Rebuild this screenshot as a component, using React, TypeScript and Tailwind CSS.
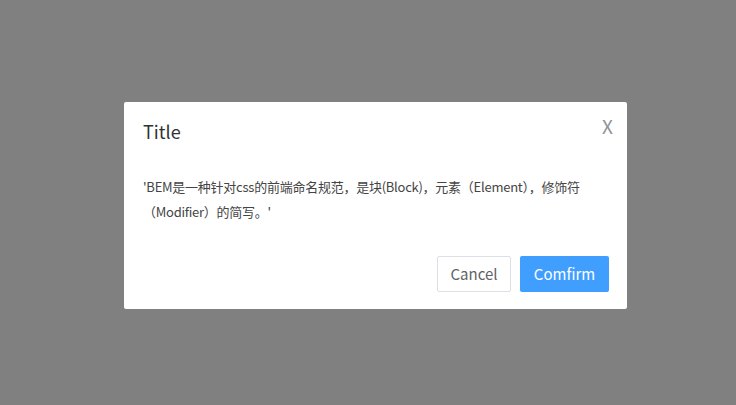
export default function App() {
  return (
    <div
      className="w-[736px] h-[405px] bg-[#808080] pl-[124px] pt-[102px]"
      style={{ fontFamily: '"Noto Sans CJK SC", "Noto Sans", sans-serif' }}
    >
      <div className="w-[503px] h-[207px] bg-white rounded-[2px] flex flex-col">
        {/* Header */}
        <div className="flex items-start justify-between pl-[19px] pr-[14px] pt-[16px]">
          <h3 className="text-[18px] leading-[26px] text-[#303133]">Title</h3>
          <button className="text-[19px] leading-[26px] text-[#909399] mt-[-5px]">X</button>
        </div>

        {/* Body */}
        <div className="mt-[30px] px-[19px] text-[13px] leading-[25px] tracking-[-0.25px] text-[#444]">
          'BEM是一种针对css的前端命名规范，是块(Block)，元素（Element），修饰符（Modifier）的简写。'
        </div>

        {/* Footer */}
        <div className="mt-auto flex justify-end gap-[9px] pr-[18px] pb-[17px]">
          <button className="h-[36px] w-[74px] border border-[#dcdfe6] rounded-[2px] text-[15px] text-[#606266] bg-white">
            Cancel
          </button>
          <button className="h-[36px] w-[89px] rounded-[2px] text-[15px] text-white bg-[#409eff]">
            Comfirm
          </button>
        </div>
      </div>
    </div>
  );
}
